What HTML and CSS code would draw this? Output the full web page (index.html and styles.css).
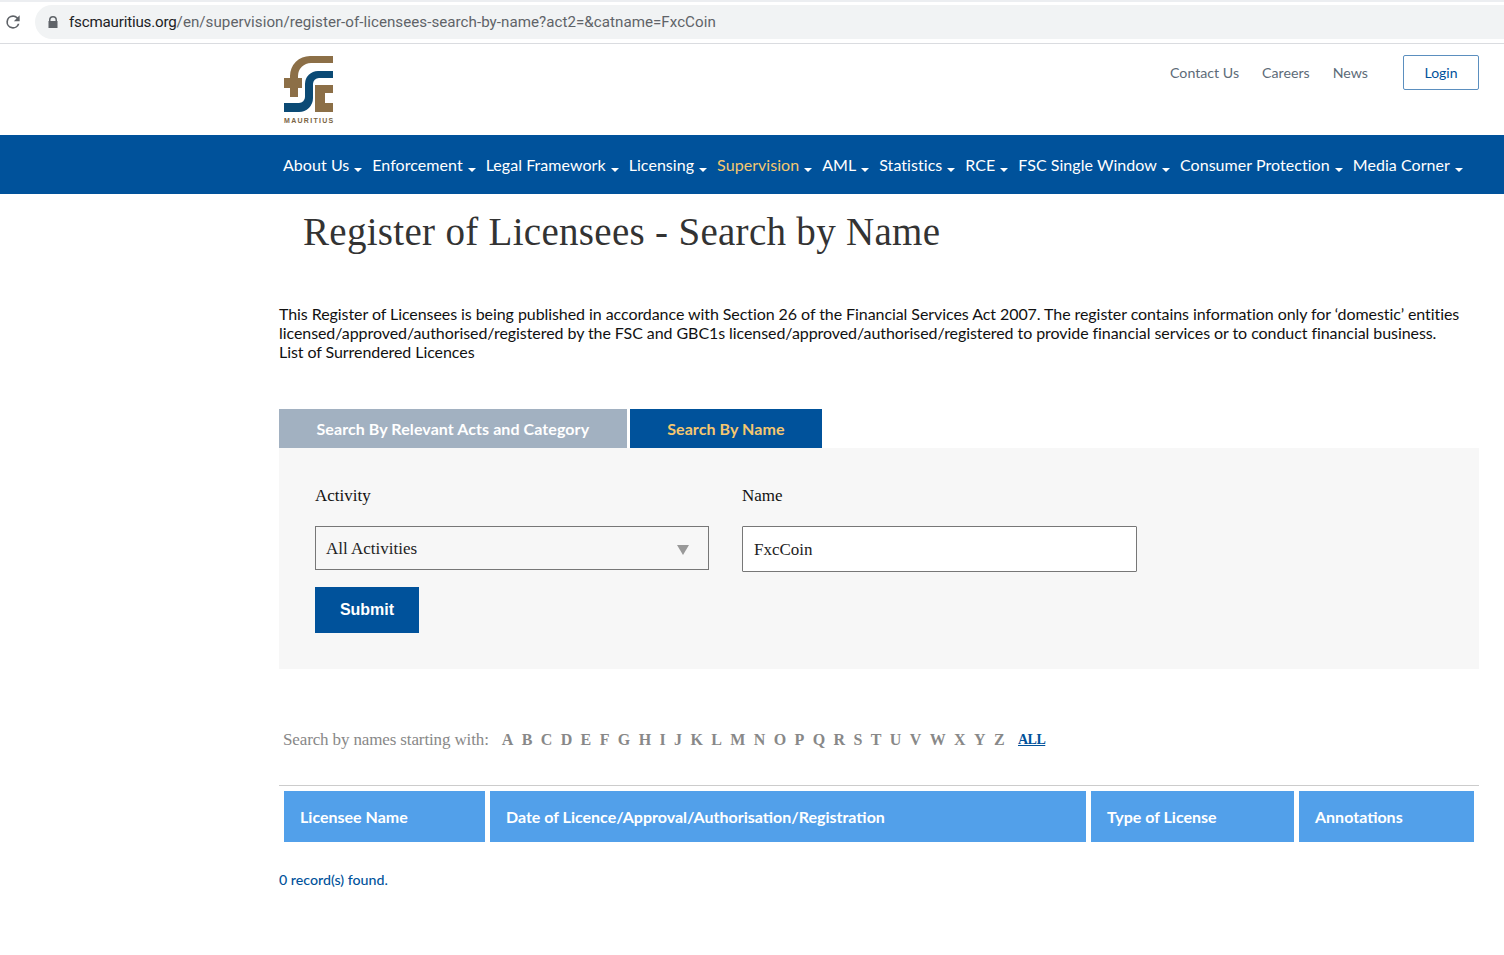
FILE: index.html
```html
<!DOCTYPE html>
<html lang="en">
<head>
	<meta charset="UTF-8">
	<title>Register of Licensees - Search by Name</title>
	<link rel="stylesheet" href="styles.css">
</head>
<body>

	<div class="chrome">
		<svg class="reload" width="20" height="20" viewBox="0 0 24 24"><path fill="#5f6368" d="M17.65 6.35A7.96 7.96 0 0 0 12 4a8 8 0 1 0 7.73 10h-2.08A6 6 0 1 1 12 6c1.66 0 3.14.69 4.22 1.78L13 11h7V4z"/></svg>
		<div class="omnibox">
			<svg class="lock" width="10" height="12" viewBox="0 0 10 12"><path fill="#5f6368" d="M1 5V4a4 4 0 0 1 8 0v1h.5v7H.5V5zm1.5 0h5V4a2.5 2.5 0 0 0-5 0z"/></svg>
			<span class="host">fscmauritius.org</span><span class="path">/en/supervision/register-of-licensees-search-by-name?act2=&amp;catname=FxcCoin</span>
		</div>
	</div>

	<div class="top">
		<a class="logo" href="#">
			<svg width="49" height="56" viewBox="0 0 49 56">
				<path fill="#8c6f47" d="M49 0H26A20 20 0 0 0 6 20v2H0v10h6v9h8v-9h4V22h-4v-2A13 13 0 0 1 27 7h22z"/>
				<path fill="#0b4a75" d="M49 15v7H35a6 6 0 0 0-6 6v14a14 14 0 0 1-14 14H0v-9h15a6 6 0 0 0 6-6V28a13 13 0 0 1 13-13z"/>
				<path fill="#8c6f47" d="M31 29h18v8h-8v10h8v9H31z"/>
			</svg>
			<span class="logo-txt">MAURITIUS</span>
		</a>
		<div class="top-links">
			<a href="#">Contact Us</a>
			<a href="#">Careers</a>
			<a href="#">News</a>
			<a class="login" href="#">Login</a>
		</div>
	</div>

	<div class="nav">
		<ul>
			<li><a href="#">About Us</a></li>
			<li><a href="#">Enforcement</a></li>
			<li><a href="#">Legal Framework</a></li>
			<li><a href="#">Licensing</a></li>
			<li class="on"><a href="#">Supervision</a></li>
			<li><a href="#">AML</a></li>
			<li><a href="#">Statistics</a></li>
			<li><a href="#">RCE</a></li>
			<li><a href="#">FSC Single Window</a></li>
			<li><a href="#">Consumer Protection</a></li>
			<li><a href="#">Media Corner</a></li>
		</ul>
	</div>

	<div class="wrap">
		<h1 class="tit">Register of Licensees - Search by Name</h1>

		<p class="intro">This Register of Licensees is being published in accordance with Section 26 of the Financial Services Act 2007. The register contains information only for ‘domestic’ entities licensed/approved/authorised/registered by the FSC and GBC1s licensed/approved/authorised/registered to provide financial services or to conduct financial business.<br>List of Surrendered Licences</p>

		<div class="tabs">
			<a class="tab" href="#">Search By Relevant Acts and Category</a>
			<a class="tab tab-on" href="#">Search By Name</a>
		</div>

		<form class="panel">
			<div class="fields">
				<div class="field">
					<label>Activity</label>
					<div class="select">All Activities</div>
				</div>
				<div class="field">
					<label>Name</label>
					<input class="txt" type="text" value="FxcCoin">
				</div>
			</div>
			<button class="btn" type="button">Submit</button>
		</form>

		<div class="alpha">
			<span class="alpha-tit">Search by names starting with:</span>
			<a href="#">A</a><a href="#">B</a><a href="#">C</a><a href="#">D</a><a href="#">E</a><a href="#">F</a><a href="#">G</a><a href="#">H</a><a href="#">I</a><a href="#">J</a><a href="#">K</a><a href="#">L</a><a href="#">M</a><a href="#">N</a><a href="#">O</a><a href="#">P</a><a href="#">Q</a><a href="#">R</a><a href="#">S</a><a href="#">T</a><a href="#">U</a><a href="#">V</a><a href="#">W</a><a href="#">X</a><a href="#">Y</a><a href="#">Z</a><a class="all" href="#">ALL</a>
		</div>

		<div class="thead">
			<div>Licensee Name</div>
			<div>Date of Licence/Approval/Authorisation/Registration</div>
			<div>Type of License</div>
			<div>Annotations</div>
		</div>

		<p class="count">0 record(s) found.</p>
	</div><!-- .wrap -->

</body>
</html>
```

FILE: styles.css
```css
*{ box-sizing: border-box;}
body{ margin: 0; color: #111; font-family: "Lato", "Liberation Sans", sans-serif; background: #fff;}
a{ text-decoration: none;}

.chrome{ display: flex; align-items: center; height: 44px; padding-top: 3px; padding-bottom: 4px; border-top: 2px solid #eceef1; border-bottom: 1px solid #dadce0;}
.reload{ flex: none; margin: 0 12px 0 3px;}
.omnibox{ display: flex; align-items: center; flex: 1; height: 34px; padding-left: 13px; font: 15.13px "Roboto", "Liberation Sans", sans-serif; white-space: nowrap; background: #f1f3f4; border-radius: 17px 0 0 17px;}
.lock{ margin-right: 11px;}
.host{ color: #202124; letter-spacing: -.18px;}
.path{ color: #5f6368; letter-spacing: .04px;}

.top{ display: flex; justify-content: space-between; height: 91px; margin-left: 279px; padding-right: 25px;}
.logo{ display: flex; flex-direction: column; align-items: flex-start; margin: 12px 0 0 5px;}
.logo svg{ display: block;}
.logo-txt{ margin-top: 5px; width: 50px; color: #7a6443; font: bold 7px/8px "Liberation Sans", sans-serif; letter-spacing: 1.3px; white-space: nowrap;}
.top-links{ display: flex; align-items: flex-start; padding-top: 11px;}
.top-links a{ margin-right: 23px; color: #5d6b78; font-size: 14.2px; line-height: 36px;}
.top-links .login{ margin: 0 0 0 12px; width: 76px; height: 35px; line-height: 33px; color: #00529b; font-size: 14px; text-align: center; border: 1px solid #5b8fbf; border-radius: 2px;}

.nav{ height: 59px; padding-left: 283px; background: #00529b;}
.nav ul{ display: flex; margin: 0; padding: 0; list-style: none; white-space: nowrap;}
.nav li{ margin-right: 10px;}
.nav a{ display: block; color: #fff; font-size: 16px; line-height: 59px; letter-spacing: .05px;}
.nav a:after{ content: ""; display: inline-block; margin-left: 5px; vertical-align: -1px; border: 4px solid transparent; border-top-color: #fff; border-bottom: 0;}
.nav .on a{ color: #f5c76f;}

.wrap{ margin-left: 279px; width: 1200px;}
.tit{ margin: 0; padding: 14px 0 0 24px; height: 110px; color: #333; font: normal 39px/48px "Liberation Serif", serif; letter-spacing: .3px;}
.intro{ margin: 0; height: 105px; color: #111; font-size: 16px; line-height: 19px; letter-spacing: -.07px;}

.tabs{ display: flex; gap: 3px;}
.tab{ height: 39px; padding: 0 37.5px; color: #fff; font-size: 16px; font-weight: 700; line-height: 39px; letter-spacing: .08px; background: #a2b1c1;}
.tab-on{ color: #f5c76f; background: #00529b;}

.panel{ height: 221px; padding: 37px 36px 0; background: #f7f7f7;}
.fields{ display: flex; align-items: flex-start; gap: 33px;}
.field{ width: 394px;}
.field label{ display: block; height: 41px; color: #111; font: 17px/22px "Liberation Serif", serif;}
.select{ position: relative; height: 44px; padding-left: 10px; color: #222; font: 17px/44px "Liberation Serif", serif; border: 1px solid #777;}
.select:after{ content: ""; position: absolute; top: 18px; right: 19px; border: 6.5px solid transparent; border-top: 10px solid #999; border-bottom: 0;}
.txt{ display: block; width: 395px; height: 46px; padding: 1px 11px 0; color: #222; font: 17px "Liberation Serif", serif; background: #fff; border: 1px solid #777; border-radius: 1px;}
.btn{ display: block; margin-top: 15px; width: 104px; height: 46px; color: #fff; font: bold 16px "Liberation Sans", sans-serif; background: #00529b; border: 0;}

.alpha{ display: flex; align-items: center; height: 117px; padding: 26px 0 0 4px; color: #888; font: 17px "Liberation Serif", serif; letter-spacing: -.13px; border-bottom: 1px solid #ccc;}
.alpha-tit{ margin-right: 13px;}
.alpha a{ margin-right: 8.5px; color: #888; font-weight: 700; font-size: 16px;}
.alpha .all{ margin: 0 0 0 5px; color: #00529b; font-size: 14px; letter-spacing: -.5px; text-decoration: underline;}

.thead{ display: grid; grid-template-columns: 201px 596px 203px 175px; gap: 5px; padding: 5px;}
.thead div{ height: 51px; padding-left: 16px; color: #fff; font-size: 16px; font-weight: 700; line-height: 52px; background: #52a0ea;}
.count{ margin: 24px 0 0; color: #00529b; font-size: 14.2px; font-weight: 500; line-height: 18px;}
```
